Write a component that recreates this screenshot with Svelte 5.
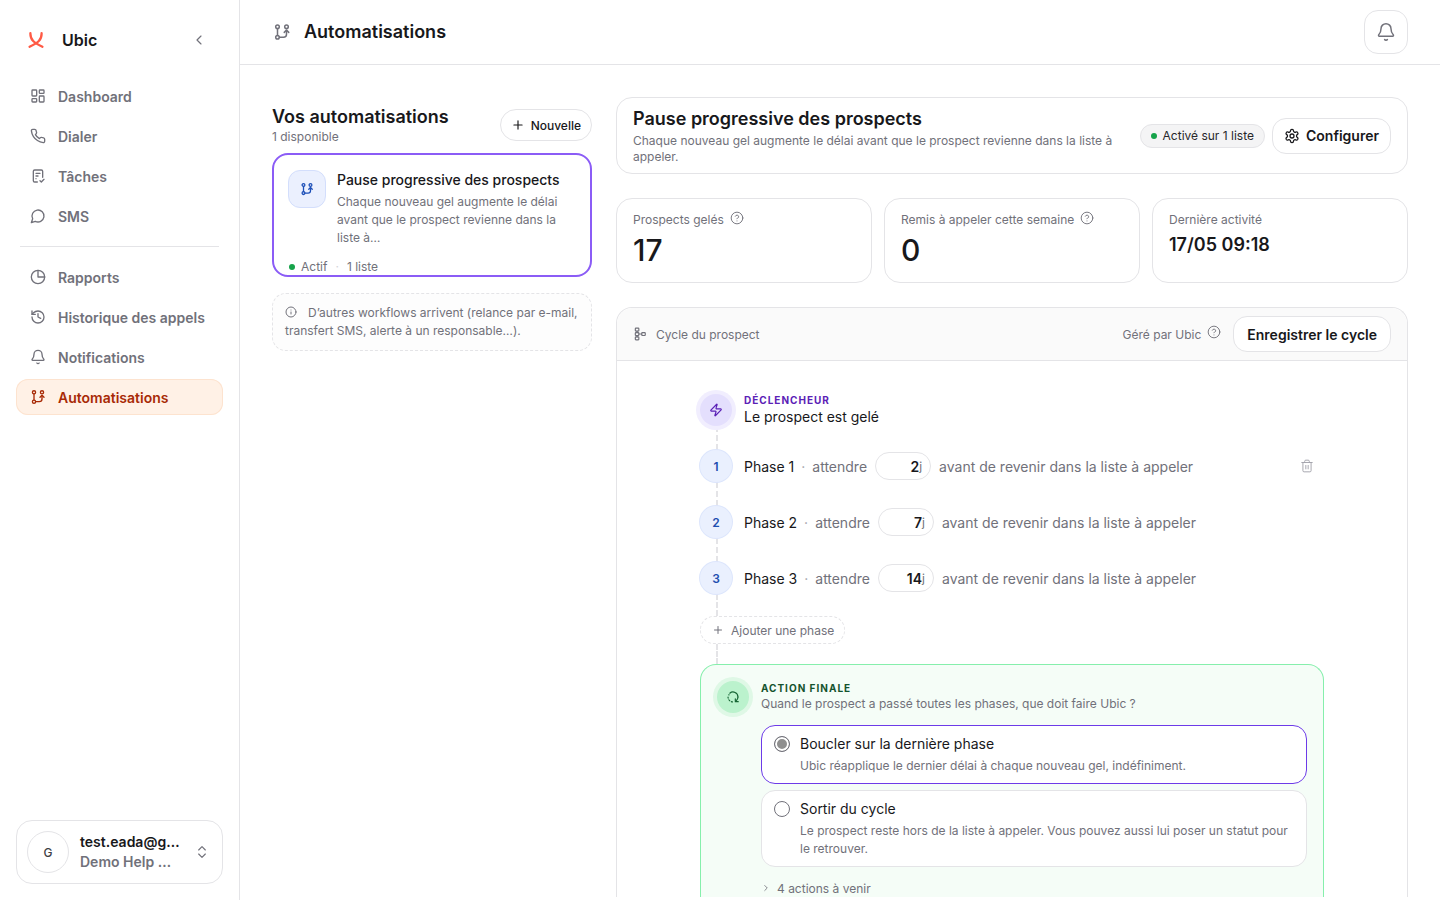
<script>
	const icons = {
		auto: '<circle cx="6" cy="5" r="2.4"/><circle cx="18" cy="5" r="2.4"/><circle cx="6" cy="19" r="2.4"/><path d="M6 7.5v9"/><path d="M8.5 19H14a4 4 0 0 0 4-4V10"/><path d="m15 12.5 3-3 3 3"/>',
		dashboard: '<rect x="3" y="3" width="7" height="9" rx="1"/><rect x="14" y="3" width="7" height="5" rx="1"/><rect x="14" y="12" width="7" height="9" rx="1"/><rect x="3" y="16" width="7" height="5" rx="1"/>',
		phone: '<path d="M22 16.9v3a2 2 0 0 1-2.2 2 19.8 19.8 0 0 1-8.6-3.1 19.5 19.5 0 0 1-6-6A19.8 19.8 0 0 1 2.1 4.2 2 2 0 0 1 4.1 2h3a2 2 0 0 1 2 1.7c.1 1 .4 1.9.7 2.8a2 2 0 0 1-.5 2.1L8.1 9.9a16 16 0 0 0 6 6l1.3-1.3a2 2 0 0 1 2.1-.4c.9.3 1.8.6 2.8.7a2 2 0 0 1 1.7 2Z"/>',
		tasks: '<path d="M11 21H7a2 2 0 0 1-2-2V5a2 2 0 0 1 2-2h10a2 2 0 0 1 2 2v9"/><path d="M9 8h6"/><path d="M9 12h3"/><path d="M9 16h.01"/><path d="m15 19 2 2 4-4"/>',
		sms: '<path d="M7.9 20A9 9 0 1 0 4 16.1L2 22Z"/>',
		reports: '<circle cx="12" cy="12" r="10"/><path d="M12 2v10h10"/>',
		history: '<path d="M3 12a9 9 0 1 0 9-9 9.75 9.75 0 0 0-6.74 2.74L3 8"/><path d="M3 3v5h5"/><path d="M12 7v5l4 2"/>',
		bell: '<path d="M10.3 21a2 2 0 0 0 3.4 0"/><path d="M3.3 15.3A1 1 0 0 0 4 17h16a1 1 0 0 0 .7-1.7C19.4 14 18 12.5 18 8A6 6 0 0 0 6 8c0 4.5-1.4 6-2.7 7.3"/>',
		chevronLeft: '<path d="m15 18-6-6 6-6"/>',
		chevronRight: '<path d="m9 18 6-6-6-6"/>',
		updown: '<path d="m7 15 5 5 5-5"/><path d="m7 9 5-5 5 5"/>',
		plus: '<path d="M5 12h14"/><path d="M12 5v14"/>',
		info: '<circle cx="12" cy="12" r="10"/><path d="M12 16v-4"/><path d="M12 8h.01"/>',
		help: '<circle cx="12" cy="12" r="10"/><path d="M9.1 9a3 3 0 0 1 5.8 1c0 2-3 3-3 3"/><path d="M12 17h.01"/>',
		settings: '<path d="M12.2 2h-.4a2 2 0 0 0-2 2v.2a2 2 0 0 1-1 1.7l-.4.3a2 2 0 0 1-2 0l-.2-.1a2 2 0 0 0-2.7.7l-.2.4a2 2 0 0 0 .7 2.7l.2.1a2 2 0 0 1 1 1.7v.5a2 2 0 0 1-1 1.8l-.2.1a2 2 0 0 0-.7 2.7l.2.4a2 2 0 0 0 2.7.7l.2-.1a2 2 0 0 1 2 0l.4.3a2 2 0 0 1 1 1.7v.2a2 2 0 0 0 2 2h.4a2 2 0 0 0 2-2v-.2a2 2 0 0 1 1-1.7l.4-.3a2 2 0 0 1 2 0l.2.1a2 2 0 0 0 2.7-.7l.2-.4a2 2 0 0 0-.7-2.7l-.2-.1a2 2 0 0 1-1-1.8v-.5a2 2 0 0 1 1-1.7l.2-.1a2 2 0 0 0 .7-2.7l-.2-.4a2 2 0 0 0-2.7-.7l-.2.1a2 2 0 0 1-2 0l-.4-.3a2 2 0 0 1-1-1.7V4a2 2 0 0 0-2-2Z"/><circle cx="12" cy="12" r="3"/>',
		network: '<rect x="4" y="2" width="6" height="5" rx="1"/><rect x="4" y="9.5" width="6" height="5" rx="1"/><rect x="4" y="17" width="6" height="5" rx="1"/><rect x="15" y="9.5" width="6" height="5" rx="1"/><path d="M10 12h5"/><path d="M7 7v2.5"/><path d="M7 14.5V17"/>',
		trash: '<path d="M3 6h18"/><path d="M19 6v14a2 2 0 0 1-2 2H7a2 2 0 0 1-2-2V6"/><path d="M8 6V4a2 2 0 0 1 2-2h4a2 2 0 0 1 2 2v2"/><path d="M10 11v6"/><path d="M14 11v6"/>',
		zap: '<path d="M4 14a1 1 0 0 1-.78-1.63l9.9-10.2a.5.5 0 0 1 .86.46l-1.92 6.02A1 1 0 0 0 13 10h7a1 1 0 0 1 .78 1.63l-9.9 10.2a.5.5 0 0 1-.86-.46l1.92-6.02A1 1 0 0 0 11 14Z"/>',
		loop: '<path d="M20.5 12a8.5 8.5 0 0 0-14-6.5" stroke-dasharray="none"/><path d="M3.5 12a8.5 8.5 0 0 0 8.5 8.5" stroke-dasharray="2 3"/><path d="M20.5 12a8.5 8.5 0 0 1-3 6.5"/><path d="M5 8.5V8" /><path d="M16 15v5h5"/>'
	};

	const navTop = [
		{ label: "Dashboard", icon: "dashboard" },
		{ label: "Dialer", icon: "phone" },
		{ label: "Tâches", icon: "tasks" },
		{ label: "SMS", icon: "sms" }
	];
	const navBottom = [
		{ label: "Rapports", icon: "reports" },
		{ label: "Historique des appels", icon: "history" },
		{ label: "Notifications", icon: "bell" },
		{ label: "Automatisations", icon: "auto", active: true }
	];
	const phases = [
		{ n: 1, days: 2 },
		{ n: 2, days: 7 },
		{ n: 3, days: 14 }
	];
</script>

{#snippet icon(name, size = 16, sw = 2)}
	<svg width={size} height={size} viewBox="0 0 24 24" fill="none" stroke="currentColor" stroke-width={sw} stroke-linecap="round" stroke-linejoin="round">{@html icons[name]}</svg>
{/snippet}

{#snippet navItem(item)}
	<a class="nav-item" class:active={item.active} href="#top">
		{@render icon(item.icon, 16)}
		<span>{item.label}</span>
	</a>
{/snippet}

<div class="app">
	<aside class="sidebar">
		<div class="brand">
			<svg class="logo" width="16" height="16" viewBox="0 0 16 16" fill="none" stroke="#ff5a45" stroke-width="2.3" stroke-linecap="round">
				<path d="M2.4 1.2C2.2 8 6 10.5 14.4 14.8" />
				<path d="M13.6 1.2C13.8 8 10 10.5 1.6 14.8" />
			</svg>
			<span class="brand-name">Ubic</span>
			<span class="collapse">{@render icon("chevronLeft", 16, 1.75)}</span>
		</div>
		<nav class="nav">
			{#each navTop as item}
				{@render navItem(item)}
			{/each}
			<div class="nav-divider"></div>
			{#each navBottom as item}
				{@render navItem(item)}
			{/each}
		</nav>
		<div class="user">
			<div class="avatar">G</div>
			<div class="user-text">
				<div class="user-mail">test.eada@g…</div>
				<div class="user-org">Demo Help …</div>
			</div>
			<span class="user-switch">{@render icon("updown", 16, 1.75)}</span>
		</div>
	</aside>

	<div class="content">
		<header class="topbar">
			<span class="topbar-icon">{@render icon("auto", 18, 2)}</span>
			<h1>Automatisations</h1>
			<button class="bell">{@render icon("bell", 20, 1.75)}</button>
		</header>

		<main class="page">
			<section class="left">
				<div class="left-head">
					<div>
						<h2>Vos automatisations</h2>
						<div class="muted-sm">1 disponible</div>
					</div>
					<button class="btn-new">{@render icon("plus", 14, 2)}Nouvelle</button>
				</div>

				<div class="wf-card">
					<div class="wf-top">
						<div class="wf-icon">{@render icon("auto", 14, 2.2)}</div>
						<div class="wf-text">
							<div class="wf-title">Pause progressive des prospects</div>
							<div class="wf-desc">Chaque nouveau gel augmente le délai avant que le prospect revienne dans la liste à…</div>
						</div>
					</div>
					<div class="wf-foot">
						<span class="dot"></span>
						<span>Actif</span>
						<span class="sep">·</span>
						<span>1 liste</span>
					</div>
				</div>

				<div class="note">
					<span class="note-icon">{@render icon("info", 12, 2)}</span>D’autres workflows arrivent (relance par e-mail, transfert SMS, alerte à un responsable…).
				</div>
			</section>

			<section class="right">
				<div class="hero">
					<div class="hero-text">
						<h2>Pause progressive des prospects</h2>
						<div class="muted-sm">Chaque nouveau gel augmente le délai avant que le prospect revienne dans la liste à appeler.</div>
					</div>
					<div class="badge"><span class="dot small"></span>Activé sur 1 liste</div>
					<button class="btn-outline">{@render icon("settings", 16, 1.9)}Configurer</button>
				</div>

				<div class="stats">
					<div class="stat">
						<div class="stat-label">Prospects gelés <span class="help">{@render icon("help", 14, 1.6)}</span></div>
						<div class="stat-value">17</div>
					</div>
					<div class="stat">
						<div class="stat-label">Remis à appeler cette semaine <span class="help">{@render icon("help", 14, 1.6)}</span></div>
						<div class="stat-value">0</div>
					</div>
					<div class="stat">
						<div class="stat-label">Dernière activité</div>
						<div class="stat-date">17/05 09:18</div>
					</div>
				</div>

				<div class="cycle">
					<div class="cycle-head">
						<span class="cycle-icon">{@render icon("network", 14, 2)}</span>
						<span class="cycle-title">Cycle du prospect</span>
						<span class="cycle-managed">Géré par Ubic <span class="help">{@render icon("help", 14, 1.6)}</span></span>
						<button class="btn-outline save">Enregistrer le cycle</button>
					</div>

					<div class="cycle-body">
						<div class="flow">
							<div class="trigger">
								<div class="trigger-icon">{@render icon("zap", 14, 2)}</div>
								<div>
									<div class="eyebrow purple">DÉCLENCHEUR</div>
									<div class="trigger-text">Le prospect est gelé</div>
								</div>
							</div>
							{#each phases as phase, i}
								<div class="link"></div>
								<div class="phase">
									<div class="phase-num">{phase.n}</div>
									<span class="phase-name">Phase {phase.n}</span>
									<span class="sep-dot">·</span>
									<span class="phase-muted">attendre</span>
									<div class="days"><b>{phase.days}</b><span>j</span></div>
									<span class="phase-muted">avant de revenir dans la liste à appeler</span>
									{#if i === 0}
										<span class="trash">{@render icon("trash", 14, 1.6)}</span>
									{/if}
								</div>
							{/each}
							<div class="link short"></div>
							<button class="add-phase">{@render icon("plus", 12, 2)}Ajouter une phase</button>
							<div class="link shorter"></div>

							<div class="final">
								<div class="final-head">
									<div class="final-icon">{@render icon("loop", 14, 2)}</div>
									<div>
										<div class="eyebrow green">ACTION FINALE</div>
										<div class="muted-sm">Quand le prospect a passé toutes les phases, que doit faire Ubic ?</div>
									</div>
								</div>
								<div class="options">
									<div class="option selected">
										<span class="radio on"></span>
										<div>
											<div class="option-title">Boucler sur la dernière phase</div>
											<div class="option-desc">Ubic réapplique le dernier délai à chaque nouveau gel, indéfiniment.</div>
										</div>
									</div>
									<div class="option">
										<span class="radio"></span>
										<div>
											<div class="option-title">Sortir du cycle</div>
											<div class="option-desc">Le prospect reste hors de la liste à appeler. Vous pouvez aussi lui poser un statut pour le retrouver.</div>
										</div>
									</div>
								</div>
								<div class="upcoming">{@render icon("chevronRight", 10, 2)}4 actions à venir</div>
							</div>
						</div>
					</div>
				</div>
			</section>
		</main>
	</div>
</div>

<style>
	:global(body) {
		margin: 0;
		background: #fff;
		color: #18181b;
		font-family: Inter, "Liberation Sans", sans-serif;
	}

	svg {
		display: block;
		flex-shrink: 0;
	}

	h1,
	h2 {
		margin: 0;
		font-weight: 600;
	}

	button {
		font-family: inherit;
		background: #fff;
		cursor: pointer;
	}

	.app {
		display: flex;
		height: 100vh;
		overflow: hidden;
	}

	/* sidebar */
	.sidebar {
		width: 240px;
		flex-shrink: 0;
		box-sizing: border-box;
		border-right: 1px solid #e4e4e7;
		padding: 16px;
		display: flex;
		flex-direction: column;
	}

	.brand {
		display: flex;
		align-items: center;
		height: 48px;
		padding-left: 12px;
		margin-bottom: 14px;
	}

	.brand-name {
		margin-left: 18px;
		font-size: 16px;
		font-weight: 600;
	}

	.collapse {
		margin-left: auto;
		margin-right: 16px;
		color: #71717a;
	}

	.nav {
		display: flex;
		flex-direction: column;
		gap: 4px;
	}

	.nav-item {
		display: flex;
		align-items: center;
		gap: 12px;
		height: 36px;
		box-sizing: border-box;
		padding-left: 14px;
		border-radius: 12px;
		color: #71717a;
		font-size: 14px;
		font-weight: 600;
		text-decoration: none;
	}

	.nav-item.active {
		background: #fff1e6;
		box-shadow: inset 0 0 0 1px #fde3cf;
		color: #a82a06;
	}

	.nav-divider {
		height: 1px;
		background: #e4e4e7;
		margin: 8px 4px 8px;
	}

	.user {
		margin-top: auto;
		height: 64px;
		box-sizing: border-box;
		border: 1px solid #e4e4e7;
		border-radius: 16px;
		display: flex;
		align-items: center;
		padding: 0 12px 0 10px;
	}

	.avatar {
		width: 42px;
		height: 42px;
		box-sizing: border-box;
		border: 1px solid #e4e4e7;
		border-radius: 50%;
		display: flex;
		align-items: center;
		justify-content: center;
		font-size: 12px;
		font-weight: 500;
		color: #3f3f46;
	}

	.user-text {
		margin-left: 11px;
		font-size: 14px;
		line-height: 20px;
		font-weight: 600;
	}

	.user-org {
		color: #71717a;
	}

	.user-switch {
		margin-left: auto;
		color: #71717a;
	}

	/* top bar */
	.content {
		flex: 1;
		min-width: 0;
		display: flex;
		flex-direction: column;
	}

	.topbar {
		height: 65px;
		flex-shrink: 0;
		box-sizing: border-box;
		border-bottom: 1px solid #e4e4e7;
		display: flex;
		align-items: center;
		padding: 0 32px 0 33px;
	}

	.topbar-icon {
		color: #71717a;
		margin-right: 13px;
	}

	.topbar h1 {
		font-size: 18px;
		line-height: 24px;
	}

	.bell {
		margin-left: auto;
		width: 44px;
		height: 44px;
		padding: 0;
		border: 1px solid #e4e4e7;
		border-radius: 14px;
		color: #71717a;
		display: flex;
		align-items: center;
		justify-content: center;
	}

	.page {
		flex: 1;
		min-height: 0;
		display: flex;
		gap: 24px;
		padding: 32px;
	}

	.muted-sm {
		font-size: 12px;
		line-height: 16px;
		color: #71717a;
	}

	/* left column */
	.left {
		width: 320px;
		flex-shrink: 0;
	}

	.left-head {
		display: flex;
		justify-content: space-between;
		align-items: center;
		height: 56px;
	}

	.left-head h2 {
		font-size: 18px;
		line-height: 24px;
		margin-top: 0;
	}

	.btn-new {
		display: flex;
		align-items: center;
		gap: 6px;
		height: 32px;
		padding: 0 10px;
		border: 1px solid #e4e4e7;
		border-radius: 16px;
		font-size: 12px;
		font-weight: 500;
		color: #18181b;
	}

	.wf-card {
		margin-top: 0;
		height: 124px;
		box-sizing: border-box;
		border: 2px solid #8b5cf6;
		border-radius: 16px;
		padding: 15px 14px 0;
	}

	.wf-top {
		display: flex;
		gap: 11px;
	}

	.wf-icon {
		width: 38px;
		height: 38px;
		flex-shrink: 0;
		box-sizing: border-box;
		border: 1px solid #d3defc;
		border-radius: 12px;
		background: #ebf0fe;
		color: #1d4fb8;
		display: flex;
		align-items: center;
		justify-content: center;
	}

	.wf-title {
		font-size: 14px;
		line-height: 20px;
		font-weight: 500;
		margin-bottom: 3px;
	}

	.wf-desc {
		font-size: 12px;
		line-height: 18px;
		color: #71717a;
	}

	.wf-foot {
		display: flex;
		align-items: center;
		gap: 6px;
		margin-top: 12px;
		padding-left: 1px;
		font-size: 12px;
		line-height: 16px;
		color: #71717a;
	}

	.dot {
		width: 6px;
		height: 6px;
		border-radius: 50%;
		background: #16a34a;
	}

	.sep {
		color: #d4d4d8;
		margin: 0 2px;
	}

	.note {
		margin-top: 16px;
		height: 58px;
		box-sizing: border-box;
		border: 1px dashed #e4e4e7;
		border-radius: 14px;
		background: #fdfdfd;
		padding: 10px 12px;
		font-size: 12px;
		line-height: 18px;
		color: #71717a;
	}

	.note-icon {
		display: inline-block;
		vertical-align: -1px;
		margin-right: 11px;
	}

	/* right column */
	.right {
		flex: 1;
		min-width: 0;
	}

	.hero {
		height: 77px;
		box-sizing: border-box;
		border: 1px solid #e4e4e7;
		border-radius: 16px;
		display: flex;
		align-items: center;
		padding: 0 16px;
	}

	.hero-text {
		flex: 1;
	}

	.hero h2 {
		font-size: 18px;
		line-height: 24px;
		margin-bottom: 2px;
	}

	.badge {
		display: flex;
		align-items: center;
		gap: 6px;
		height: 24px;
		box-sizing: border-box;
		padding: 0 10px;
		border: 1px solid #e4e4e7;
		border-radius: 12px;
		background: #f4f4f5;
		font-size: 12px;
		font-weight: 400;
		color: #27272a;
		margin-right: 7px;
	}

	.dot.small {
		width: 6px;
		height: 6px;
	}

	.btn-outline {
		display: flex;
		align-items: center;
		gap: 6px;
		height: 36px;
		padding: 0 11px;
		border: 1px solid #e4e4e7;
		border-radius: 14px;
		font-size: 14px;
		font-weight: 600;
		color: #18181b;
	}

	.stats {
		display: grid;
		grid-template-columns: repeat(3, 1fr);
		gap: 12px;
		margin-top: 24px;
	}

	.stat {
		height: 85px;
		box-sizing: border-box;
		border: 1px solid #e4e4e7;
		border-radius: 16px;
		padding: 12px 16px;
	}

	.stat-label {
		display: flex;
		align-items: center;
		gap: 6px;
		font-size: 12px;
		line-height: 18px;
		color: #71717a;
	}

	.help {
		color: #71717a;
		position: relative;
		top: -2px;
	}

	.stat-value {
		font-size: 30px;
		line-height: 36px;
		font-weight: 500;
		margin-top: 3px;
	}

	.stat-date {
		font-size: 18px;
		line-height: 24px;
		font-weight: 600;
		margin-top: 4px;
	}

	/* cycle */
	.cycle {
		margin-top: 24px;
		border: 1px solid #e4e4e7;
		border-bottom: 0;
		border-radius: 16px 16px 0 0;
	}

	.cycle-head {
		height: 53px;
		box-sizing: border-box;
		background: #fafafa;
		border-bottom: 1px solid #e4e4e7;
		border-radius: 16px 16px 0 0;
		display: flex;
		align-items: center;
		padding: 0 16px;
		font-size: 12px;
		color: #71717a;
	}

	.cycle-icon {
		margin-right: 9px;
	}

	.cycle-managed {
		margin-left: auto;
		display: flex;
		align-items: center;
		gap: 6px;
		margin-right: 12px;
	}

	.btn-outline.save {
		padding: 0 13px;
	}

	.cycle-body {
		padding: 33px 0 0;
	}

	.flow {
		width: 624px;
		margin: 0 auto;
	}

	.trigger {
		display: flex;
		align-items: center;
		gap: 12px;
		height: 32px;
	}

	.trigger-icon {
		position: relative;
		width: 32px;
		height: 32px;
		flex-shrink: 0;
		border-radius: 50%;
		background: #e4dffd;
		box-shadow: 0 0 0 4px #f1eefe;
		color: #5b21b6;
		display: flex;
		align-items: center;
		justify-content: center;
	}

	.eyebrow {
		font-size: 10px;
		line-height: 12px;
		font-weight: 700;
		letter-spacing: 1px;
	}

	.eyebrow.purple {
		color: #5b21b6;
	}

	.eyebrow.green {
		color: #14532d;
		margin-bottom: 2px;
	}

	.trigger-text {
		font-size: 14px;
		line-height: 20px;
		margin-top: 1px;
	}

	.link {
		width: 0;
		height: 24px;
		margin-left: 16px;
		border-left: 2px dashed #e4e4e7;
	}

	.link.short {
		height: 22px;
	}

	.link.shorter {
		height: 20px;
	}

	.phase {
		display: flex;
		align-items: center;
		height: 32px;
		font-size: 14px;
	}

	.phase-num {
		position: relative;
		width: 32px;
		height: 32px;
		flex-shrink: 0;
		margin-right: 12px;
		border-radius: 50%;
		background: #eaf0fe;
		box-shadow: 0 0 0 1px #dde6fc;
		color: #1e4fb0;
		font-size: 12px;
		font-weight: 600;
		display: flex;
		align-items: center;
		justify-content: center;
	}

	.sep-dot {
		margin: 0 7px;
		color: #a1a1aa;
	}

	.phase-muted {
		color: #71717a;
	}

	.days {
		width: 56px;
		height: 28px;
		box-sizing: border-box;
		margin: 0 8px;
		border: 1px solid #e4e4e7;
		border-radius: 14px;
		display: flex;
		align-items: center;
		justify-content: flex-end;
		padding-right: 8px;
		color: #71717a;
		font-size: 12px;
	}

	.days b {
		font-size: 14px;
		font-weight: 600;
		color: #18181b;
	}

	.trash {
		margin-left: auto;
		margin-right: 10px;
		color: #a1a1aa;
	}

	.add-phase {
		display: flex;
		align-items: center;
		gap: 7px;
		height: 28px;
		box-sizing: border-box;
		padding: 0 10px 0 11px;
		border: 1px dashed #e4e4e7;
		border-radius: 14px;
		font-size: 12px;
		color: #71717a;
	}

	.final {
		border: 1px solid #86efac;
		border-bottom: 0;
		border-radius: 16px 16px 0 0;
		background: #f5fdf7;
		padding: 16px 16px 0;
	}

	.final-head {
		display: flex;
		align-items: center;
		gap: 12px;
		height: 32px;
	}

	.final-icon {
		width: 32px;
		height: 32px;
		flex-shrink: 0;
		border-radius: 50%;
		background: #bbf2cd;
		box-shadow: 0 0 0 4px #dff8e6;
		color: #166534;
		display: flex;
		align-items: center;
		justify-content: center;
	}

	.options {
		margin: 12px 0 0 44px;
		display: flex;
		flex-direction: column;
		gap: 6px;
	}

	.option {
		display: flex;
		gap: 10px;
		padding: 8px 12px;
		border: 1px solid #e4e4e7;
		border-radius: 14px;
		background: #fff;
	}

	.option.selected {
		border-color: #6d3be8;
	}

	.radio {
		width: 16px;
		height: 16px;
		flex-shrink: 0;
		box-sizing: border-box;
		margin-top: 2px;
		border: 1px solid #71717a;
		border-radius: 50%;
		background: #fff;
	}

	.radio.on {
		background: #8f8f8f;
		box-shadow: inset 0 0 0 2px #fff;
	}

	.option-title {
		font-size: 14px;
		line-height: 20px;
	}

	.option-desc {
		margin-top: 3px;
		font-size: 12px;
		line-height: 18px;
		color: #71717a;
	}

	.upcoming {
		display: flex;
		align-items: center;
		gap: 6px;
		margin: 12px 0 0 44px;
		height: 18px;
		font-size: 12px;
		color: #71717a;
	}
</style>
